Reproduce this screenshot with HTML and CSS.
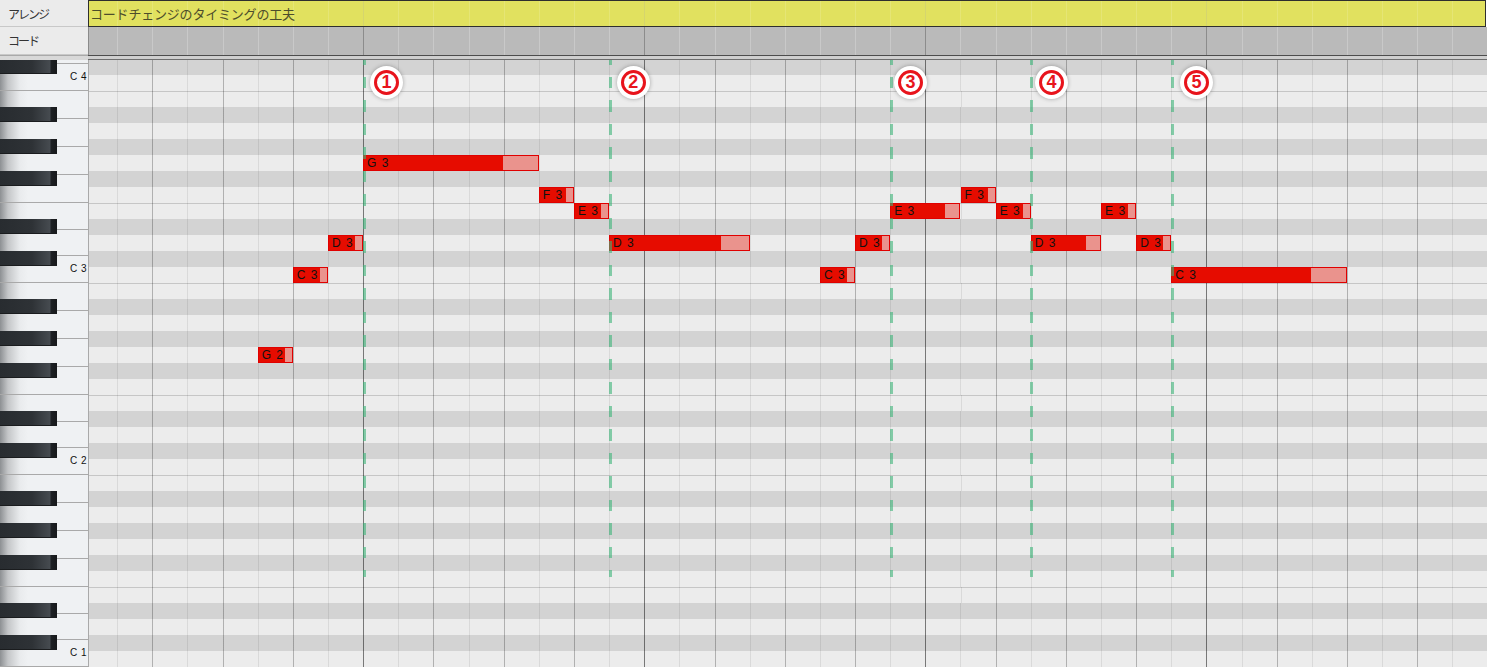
FILE: index.html
```html
<!DOCTYPE html>
<html lang="ja">
<head>
  <meta charset="UTF-8" />
  <meta name="viewport" content="width=device-width, initial-scale=1.0" />
  <title>ピアノロール</title>
  <link rel="stylesheet" href="styles.css">
</head>
<body>
  <div class="editor">
    <div class="track-name">アレンジ</div>
    <div class="arrange-lane">コードチェンジのタイミングの工夫</div>
    <div class="track-name">コード</div>
    <div class="chord-lane"></div>
    <div class="split-left"></div>
    <div class="split-right"></div>

    <div class="keyboard">
      <div class="white-keys">
        <div class="wk short first"></div>
        <div class="wk short"><span>C 4</span></div>
        <div class="wk"></div>
        <div class="wk"></div>
        <div class="wk"></div>
        <div class="wk"></div>
        <div class="wk short"></div>
        <div class="wk short"></div>
        <div class="wk short"><span>C 3</span></div>
        <div class="wk"></div>
        <div class="wk"></div>
        <div class="wk"></div>
        <div class="wk"></div>
        <div class="wk short"></div>
        <div class="wk short"></div>
        <div class="wk short"><span>C 2</span></div>
        <div class="wk"></div>
        <div class="wk"></div>
        <div class="wk"></div>
        <div class="wk"></div>
        <div class="wk short"></div>
        <div class="wk short"></div>
        <div class="wk short"><span>C 1</span></div>
      </div>
      <div class="black-keys">
        <div class="bk two"></div>
        <div class="bk"></div>
        <div class="bk"></div>
        <div class="bk two"></div>
        <div class="bk"></div>
        <div class="bk two"></div>
        <div class="bk"></div>
        <div class="bk"></div>
        <div class="bk two"></div>
        <div class="bk"></div>
        <div class="bk two"></div>
        <div class="bk"></div>
        <div class="bk"></div>
        <div class="bk two"></div>
        <div class="bk"></div>
        <div class="bk"></div>
      </div>
    </div>

    <div class="roll">
      <div class="rows">
        <div class="row k"></div>
        <div class="row"></div>
        <div class="row line"></div>
        <div class="row k"></div>
        <div class="row"></div>
        <div class="row k"></div>
        <div class="row"></div>
        <div class="row k"></div>
        <div class="row"></div>
        <div class="row line"></div>
        <div class="row k"></div>
        <div class="row"></div>
        <div class="row k"></div>
        <div class="row"></div>
        <div class="row line"></div>
        <div class="row k"></div>
        <div class="row"></div>
        <div class="row k"></div>
        <div class="row"></div>
        <div class="row k"></div>
        <div class="row"></div>
        <div class="row line"></div>
        <div class="row k"></div>
        <div class="row"></div>
        <div class="row k"></div>
        <div class="row"></div>
        <div class="row line"></div>
        <div class="row k"></div>
        <div class="row"></div>
        <div class="row k"></div>
        <div class="row"></div>
        <div class="row k"></div>
        <div class="row"></div>
        <div class="row line"></div>
        <div class="row k"></div>
        <div class="row"></div>
        <div class="row k"></div>
        <div class="row"></div>
      </div>

      <!-- notes: left = step * 35.14 - 7, top = row * 16 - 1 -->
      <div class="note" style="left:168.7px;top:287px;width:35.14px">G 2</div>
      <div class="note" style="left:203.84px;top:207px;width:35.14px">C 3</div>
      <div class="note" style="left:238.98px;top:175px;width:35.14px">D 3</div>
      <div class="note" style="left:274.12px;top:95px;width:175.7px">G 3</div>
      <div class="note" style="left:449.82px;top:127px;width:35.14px">F 3</div>
      <div class="note" style="left:484.96px;top:143px;width:35.14px">E 3</div>
      <div class="note" style="left:520.1px;top:175px;width:140.56px">D 3</div>
      <div class="note" style="left:730.94px;top:207px;width:35.14px">C 3</div>
      <div class="note" style="left:766.08px;top:175px;width:35.14px">D 3</div>
      <div class="note" style="left:801.22px;top:143px;width:70.28px">E 3</div>
      <div class="note" style="left:871.5px;top:127px;width:35.14px">F 3</div>
      <div class="note" style="left:906.64px;top:143px;width:35.14px">E 3</div>
      <div class="note" style="left:941.78px;top:175px;width:70.28px">D 3</div>
      <div class="note" style="left:1012.06px;top:143px;width:35.14px">E 3</div>
      <div class="note" style="left:1047.2px;top:175px;width:35.14px">D 3</div>
      <div class="note" style="left:1082.34px;top:207px;width:175.7px">C 3</div>

      <div class="cue" style="left:273.6px"></div>
      <div class="cue" style="left:519.6px"></div>
      <div class="cue" style="left:800.7px"></div>
      <div class="cue" style="left:941.3px"></div>
      <div class="cue" style="left:1081.8px"></div>

      <div class="mark" style="left:285px">1</div>
      <div class="mark" style="left:531.7px">2</div>
      <div class="mark" style="left:809px">3</div>
      <div class="mark" style="left:950px">4</div>
      <div class="mark" style="left:1095px">5</div>
    </div>
  </div>
</body>
</html>
```

FILE: styles.css
```css
* {
  margin: 0;
  padding: 0;
  box-sizing: border-box;
}
:root {
  /* beat grid: bar = 8 steps of 35.14px, first bar line 7px left of the roll */
  --grid-lines:
    repeating-linear-gradient(to right, transparent 0 274.12px, rgba(0,0,0,0.32) 274.12px 275.12px, transparent 275.12px 281.12px),
    repeating-linear-gradient(to right, transparent 0 63.28px, rgba(0,0,0,0.19) 63.28px 64.28px, transparent 64.28px 70.28px),
    repeating-linear-gradient(to right, transparent 0 28.14px, rgba(0,0,0,0.08) 28.14px 29.14px, transparent 29.14px 35.14px);
}
body {
  font-family: "Noto Sans CJK JP", "Liberation Sans", sans-serif;
  background: #fff;
  overflow: hidden;
}
.editor {
  display: grid;
  grid-template-columns: 88px 1fr;
  grid-template-rows: 27px 28px 5px 1fr;
  height: 100vh;
}
.track-name {
  display: flex;
  align-items: center;
  padding-left: 8px;
  background: #ebebeb;
  border-bottom: 1px solid #c8c8c8;
  font-size: 12px;
  letter-spacing: -2px;
  color: #333;
}
.arrange-lane {
  display: flex;
  align-items: center;
  padding-left: 1px;
  margin-right: 1px;
  border: 1px solid #2e2e2e;
  background:
    repeating-linear-gradient(to right, transparent 0 274.12px, rgba(0,0,0,0.07) 274.12px 275.12px, transparent 275.12px 281.12px),
    repeating-linear-gradient(to right, transparent 0 28.14px, rgba(255,255,255,0.14) 28.14px 29.14px, transparent 29.14px 35.14px),
    #e1e15f;
  font-size: 13px;
  letter-spacing: -0.2px;
  color: #4d4d2b;
  white-space: nowrap;
  overflow: hidden;
}
.chord-lane {
  border-left: 1px solid #8a8a8a;
  background:
    repeating-linear-gradient(to right, transparent 0 274.12px, #8c8c8c 274.12px 275.12px, transparent 275.12px 281.12px),
    repeating-linear-gradient(to right, transparent 0 28.14px, rgba(255,255,255,0.22) 28.14px 29.14px, transparent 29.14px 35.14px),
    #bababa;
}
.split-left {
  border-top: 1px solid #a9a9a9;
  background: #d8d8d8;
}
.split-right {
  border-top: 1px solid #4d4d4d;
  border-bottom: 1px solid #6d6d6d;
  background: #cfcfcf;
}

/* keyboard */
.keyboard {
  position: relative;
  overflow: hidden;
  box-shadow: inset -1px 0 #d4d4d4;
}
.white-keys {
  display: flex;
  flex-direction: column;
}
.wk {
  flex: none;
  height: 28px;
  display: flex;
  align-items: flex-end;
  justify-content: flex-end;
  padding: 0 1px 8px 0;
  border-bottom: 1px solid #a9a9a9;
  background: linear-gradient(to right, #8d9093 0, #c4c6c8 8px, #e9ebed 20px, #eff1f3 28px);
}
.wk.short {
  height: 26.667px;
}
.wk.first {
  margin-top: -22.333px;
}
.wk span {
  font-family: "Liberation Sans", sans-serif;
  font-size: 10px;
  line-height: 10px;
  letter-spacing: 0.5px;
  color: #111;
}
.black-keys {
  position: absolute;
  top: -1px;
  left: 0;
  display: flex;
  flex-direction: column;
}
.bk {
  flex: none;
  width: 57px;
  height: 15px;
  margin-bottom: 17px;
  background: linear-gradient(to right, #282c30 0, #2e3236 32px, #464b50 50px, #1e2124 51px, #17191b 57px);
  box-shadow: inset 0 -1px #1a1c1e;
}
.bk.two {
  margin-bottom: 33px;
}

/* piano roll */
.roll {
  position: relative;
  overflow: hidden;
  border-left: 1px solid #a9a9a9;
}
.rows {
  margin-top: -1px;
}
.row {
  height: 16px;
  background: var(--grid-lines), #ececec;
}
.row.k {
  background: var(--grid-lines), #d3d3d3;
}
.row.line {
  border-top: 1px solid rgba(0,0,0,0.16);
}
.note {
  position: absolute;
  height: 16px;
  padding-left: 3px;
  border: 1px solid #e00000;
  background: linear-gradient(to right, #e60c00 80%, #ea938d 80%);
  font-family: "Liberation Sans", sans-serif;
  font-size: 12px;
  line-height: 14px;
  letter-spacing: 1px;
  color: #111;
  white-space: nowrap;
  overflow: hidden;
}
.cue {
  position: absolute;
  top: 0;
  width: 3px;
  height: 517px;
  background: repeating-linear-gradient(to bottom,
    rgba(60,180,120,0.6) 0 4.95px,
    transparent 4.95px 16.7px,
    rgba(60,180,120,0.6) 16.7px 23.5px);
}
.mark {
  position: absolute;
  top: 9.5px;
  width: 25px;
  height: 25px;
  border: 3px solid #e8141c;
  border-radius: 50%;
  background: #fff;
  box-shadow: 0 0 0 4px #fff, 0 0 4px 4px rgba(0,0,0,0.3);
  font-family: "Liberation Sans", sans-serif;
  font-weight: bold;
  font-size: 18px;
  line-height: 19px;
  text-align: center;
  color: #e8141c;
}
```
